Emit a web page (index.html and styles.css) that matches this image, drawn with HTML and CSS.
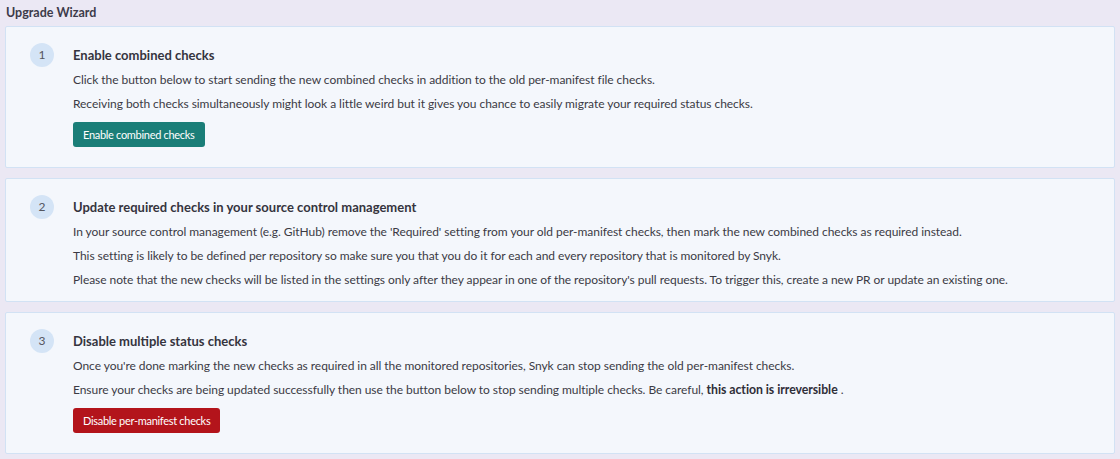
FILE: index.html
```html
<!DOCTYPE html>
<html lang="en">
<head>
<meta charset="utf-8">
<title>Upgrade Wizard</title>
<link rel="stylesheet" href="styles.css">
</head>
<body>
<div class="page">
  <h1 class="title">Upgrade Wizard</h1>

  <section class="card">
    <div class="step">1</div>
    <div class="content">
      <h2 class="heading">Enable combined checks</h2>
      <p class="text">Click the button below to start sending the new combined checks in addition to the old per-manifest file checks.</p>
      <p class="text">Receiving both checks simultaneously might look a little weird but it gives you chance to easily migrate your required status checks.</p>
      <button class="btn btn-teal" type="button">Enable combined checks</button>
    </div>
  </section>

  <section class="card">
    <div class="step">2</div>
    <div class="content">
      <h2 class="heading">Update required checks in your source control management</h2>
      <p class="text">In your source control management (e.g. GitHub) remove the 'Required' setting from your old per-manifest checks, then mark the new combined checks as required instead.</p>
      <p class="text">This setting is likely to be defined per repository so make sure you that you do it for each and every repository that is monitored by Snyk.</p>
      <p class="text">Please note that the new checks will be listed in the settings only after they appear in one of the repository's pull requests. To trigger this, create a new PR or update an existing one.</p>
    </div>
  </section>

  <section class="card">
    <div class="step">3</div>
    <div class="content">
      <h2 class="heading">Disable multiple status checks</h2>
      <p class="text">Once you're done marking the new checks as required in all the monitored repositories, Snyk can stop sending the old per-manifest checks.</p>
      <p class="text">Ensure your checks are being updated successfully then use the button below to stop sending multiple checks. Be careful, <strong>this action is irreversible</strong> .</p>
      <button class="btn btn-red" type="button">Disable per-manifest checks</button>
    </div>
  </section>
</div>
</body>
</html>
```

FILE: styles.css
```css
html, body {
  margin: 0;
  padding: 0;
  background: #ebe8f4;
}

body {
  font-family: Lato, "Open Sans", sans-serif;
  color: #3b3a44;
  font-size: 12px;
}

.page {
  padding: 0 5px 6px 5px;
  display: flex;
  flex-direction: column;
  gap: 10px;
}

.title {
  margin: 0 0 -10px 1px;
  font-size: 12.5px;
  font-weight: 700;
  line-height: 26px;
  color: #3d3b4a;
}

.card {
  display: flex;
  align-items: flex-start;
  gap: 19px;
  background: #f4f7fc;
  border: 1px solid #d2e2f4;
  border-radius: 2px;
  padding: 18px 24px 7px 24px;
}

.step {
  flex: none;
  width: 24px;
  height: 24px;
  margin-top: -2px;
  border-radius: 50%;
  background: #d4e4f6;
  color: #55565f;
  font-size: 12px;
  line-height: 24px;
  text-align: center;
}

.content {
  display: flex;
  flex-direction: column;
  align-items: flex-start;
}

.heading {
  margin: 0 0 5px 0;
  font-size: 13px;
  font-weight: 700;
  line-height: 20px;
  color: #35343e;
}

.text {
  margin: 0 0 4px 0;
  line-height: 20px;
  letter-spacing: -0.05px;
}

.text strong {
  font-weight: 700;
  font-size: 12.3px;
  color: #2f2e38;
}

.btn {
  margin: 4px 0 13px 0;
  height: 25px;
  padding: 0 10px;
  border: none;
  border-radius: 3px;
  color: #ffffff;
  font-family: inherit;
  font-size: 11px;
  letter-spacing: -0.3px;
  line-height: 25px;
  cursor: pointer;
}

.btn-teal {
  background: #1a7e78;
}

.btn-red {
  background: #b3141b;
}
```
